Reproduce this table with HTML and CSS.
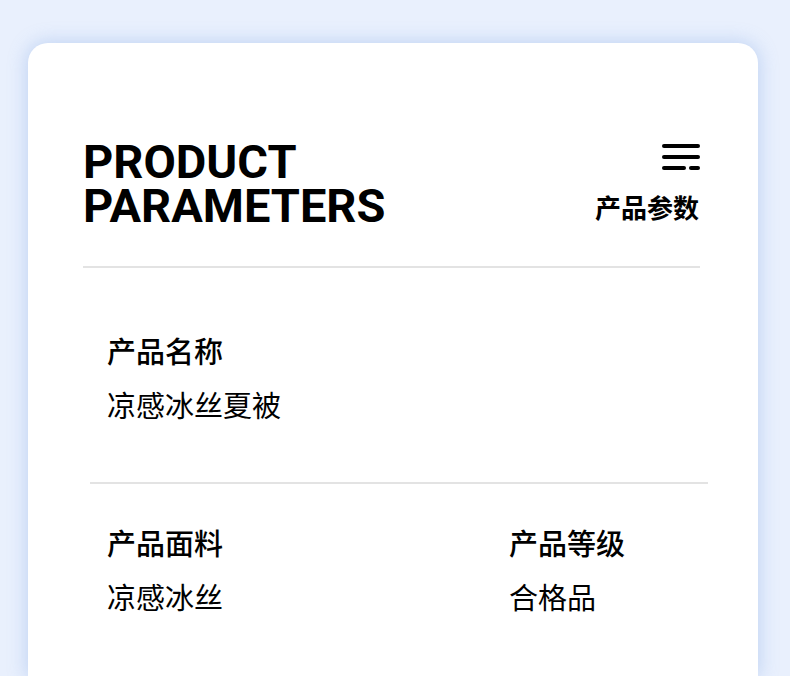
FILE: index.html
```html
<!DOCTYPE html>
<html lang="zh-CN">
<head>
<meta charset="utf-8">
<title>Product Parameters</title>
<link rel="stylesheet" href="styles.css">
</head>
<body>
<div class="card">
  <header class="head">
    <h1 class="title"><span class="title-line">PRODUCT</span><span class="title-line">PARAMETERS</span></h1>
    <div class="side">
      <svg class="menu" width="40" height="28" viewBox="0 0 40 28" aria-hidden="true">
        <g stroke="#000" stroke-width="4" stroke-linecap="round" fill="none">
          <line x1="3" y1="2" x2="37" y2="2"/>
          <line x1="3" y1="13" x2="37" y2="13"/>
          <line x1="3" y1="24" x2="23" y2="24"/>
          <line x1="30" y1="24" x2="37" y2="24"/>
        </g>
      </svg>
      <div class="side-label">产品参数</div>
    </div>
  </header>
  <div class="rule rule-a"></div>
  <section class="row row-one">
    <div class="item">
      <div class="label">产品名称</div>
      <div class="value">凉感冰丝夏被</div>
    </div>
  </section>
  <div class="rule rule-b"></div>
  <section class="row row-two">
    <div class="item">
      <div class="label">产品面料</div>
      <div class="value">凉感冰丝</div>
    </div>
    <div class="item">
      <div class="label">产品等级</div>
      <div class="value">合格品</div>
    </div>
  </section>
</div>
</body>
</html>
```
FILE: styles.css
```css
html, body {
  margin: 0;
  padding: 0;
}
body {
  background: #e9f0fd;
  font-family: "Noto Sans CJK SC", "Noto Sans", sans-serif;
  color: #000;
  height: 676px;
  overflow: hidden;
}
.card {
  margin: 43px 0 0 28px;
  width: 730px;
  height: 633px;
  background: #fff;
  border-radius: 20px 20px 0 0;
  box-shadow: 0 0 18px 2px rgba(120, 160, 225, 0.35);
  box-sizing: border-box;
  padding-top: 97px;
}
.head {
  display: flex;
  justify-content: space-between;
  align-items: flex-start;
  padding: 0 59px 0 55px;
}
.title {
  margin: 0;
  display: flex;
  flex-direction: column;
  font-family: Roboto, "Liberation Sans", Arial, sans-serif;
  font-weight: 700;
  font-size: 47px;
  line-height: 44px;
  letter-spacing: 0;
}
.title-line {
  display: block;
  height: 44px;
}
.side {
  display: flex;
  flex-direction: column;
  align-items: flex-end;
  padding-top: 4px;
}
.menu {
  display: block;
  margin-right: -2px;
}
.side-label {
  margin-top: 22px;
  font-size: 26px;
  line-height: 26px;
  font-weight: 700;
}
.rule {
  height: 2px;
  background: #e3e3e3;
}
.rule-a {
  margin: 38px 58px 0 55px;
}
.rule-b {
  margin: 0 50px 0 62px;
}
.row {
  padding-left: 79px;
}
.row-one {
  padding-top: 64px;
  padding-bottom: 60px;
}
.row-two {
  padding-top: 40px;
  display: grid;
  grid-template-columns: 402px 1fr;
}
.label {
  font-size: 29px;
  line-height: 36px;
  font-weight: 500;
}
.value {
  margin-top: 18px;
  font-size: 29px;
  line-height: 36px;
  font-weight: 400;
}
```
